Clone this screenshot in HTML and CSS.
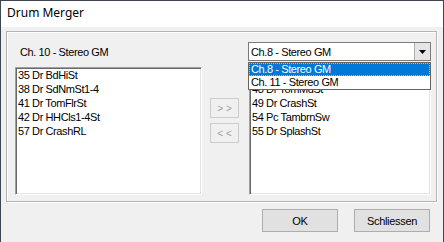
FILE: index.html
```html
<!DOCTYPE html>
<html lang="de">
<head>
    <meta charset="UTF-8">
    <title>Drum Merger</title>
    <link rel="stylesheet" href="styles.css">
</head>
<body>
    <div class="window">
        <div class="titlebar">Drum Merger</div>

        <div class="groupbox">
            <div class="src-label">Ch. 10 - Stereo GM</div>
            <div></div>
            <div class="combo">
                <span class="combo-text">Ch.8 - Stereo GM</span>
                <span class="combo-btn">
                    <svg width="7" height="4" viewBox="0 0 7 4"><path d="M0 0h7L3.5 4z" fill="#000"/></svg>
                </span>
                <div class="dropdown">
                    <div class="dd-item selected">Ch.8 - Stereo GM</div>
                    <div class="dd-item">Ch. 11 - Stereo GM</div>
                </div>
            </div>

            <div class="listbox">
                <div class="item">35 Dr BdHiSt</div>
                <div class="item">38 Dr SdNmSt1-4</div>
                <div class="item">41 Dr TomFlrSt</div>
                <div class="item">42 Dr HHCls1-4St</div>
                <div class="item">57 Dr CrashRL</div>
            </div>

            <div class="move-btns">
                <button class="move" disabled>&gt; &gt;</button>
                <button class="move" disabled>&lt; &lt;</button>
            </div>

            <div class="listbox">
                <div class="item hidden-row">36 Dr BdSt</div>
                <div class="item">48 Dr TomMdSt</div>
                <div class="item">49 Dr CrashSt</div>
                <div class="item">54 Pc TambrnSw</div>
                <div class="item">55 Dr SplashSt</div>
            </div>
        </div>

        <div class="footer">
            <button class="btn">OK</button>
            <button class="btn">Schliessen</button>
        </div>
    </div>
</body>
</html>
```

FILE: styles.css
```css
body{
  margin:0;
  background:#f0f0f0;
  font-family:"Liberation Sans", Arial, sans-serif;
  font-size:11px;
  letter-spacing:-0.4px;
  color:#000;
}
.window{
  height:242px;
  background:#f0f0f0;
  border:1px solid #3c4650;
  border-bottom:none;
  box-sizing:border-box;
}
.titlebar{
  height:26px;
  background:#fff;
  padding-left:6px;
  font-family:"Noto Sans", sans-serif;
  font-size:12px;
  letter-spacing:0;
  line-height:24px;
}
.groupbox{
  margin:4px 6px 0 5px;
  height:171px;
  box-sizing:border-box;
  border:1px solid #b4b4b4;
  box-shadow:inset 1px 1px 0 #fff, 1px 1px 0 #fff;
  padding:10px 7px 6px 8px;
  display:grid;
  grid-template-columns:187px 29px 182px;
  grid-template-rows:19px 128px;
  column-gap:9px;
  row-gap:6px;
}
.groupbox > :nth-child(5){ margin-left:-1px; }
.src-label{
  padding-left:5px;
  align-self:center;
}
.combo{
  position:relative;
  margin-left:-1px;
  background:#fff;
  border:1px solid #7a7a7a;
  display:flex;
  align-items:center;
}
.combo-text{
  flex:1;
  padding-left:2px;
}
.combo-btn{
  width:15px;
  height:17px;
  background:#e5e5e5;
  border-left:1px solid #b0b0b0;
  display:flex;
  align-items:center;
  justify-content:center;
}
.dropdown{
  position:absolute;
  left:-1px;
  right:-1px;
  top:19px;
  background:#fff;
  border:1px solid #646464;
  z-index:2;
}
.dd-item{
  height:13px;
  line-height:13px;
  padding-left:2px;
}
.dd-item.selected{
  background:#0078d7;
  color:#fff;
  outline:1px dotted #c0c0c0;
  outline-offset:-1px;
}
.listbox{
  background:#fff;
  border:1px solid #a0a0a0;
  border-right-color:#fff;
  border-bottom-color:#fff;
  box-shadow:inset 1px 1px 0 #696969, inset -1px -1px 0 #e3e3e3;
  padding-left:2px;
}
.item{
  line-height:14px;
  white-space:nowrap;
}
/* row fully covered by the open dropdown */
.hidden-row{ visibility:hidden; }
.move-btns{
  padding-top:31px;
  display:flex;
  flex-direction:column;
  gap:5px;
}
.move{
  width:29px;
  height:20px;
  padding:0;
  background:#f0f0f0;
  border:1px solid #cccccc;
  color:#a0a0a0;
  font-family:"Liberation Sans", Arial, sans-serif;
  font-size:10px;
  letter-spacing:0;
}
.footer{
  display:flex;
  justify-content:flex-end;
  gap:16px;
  padding:7px 13px 0 0;
}
.btn{
  width:76px;
  height:23px;
  background:#e1e1e1;
  border:1px solid #adadad;
  font-family:"Liberation Sans", Arial, sans-serif;
  font-size:11px;
  letter-spacing:-0.3px;
  color:#000;
  padding:0;
}
```
